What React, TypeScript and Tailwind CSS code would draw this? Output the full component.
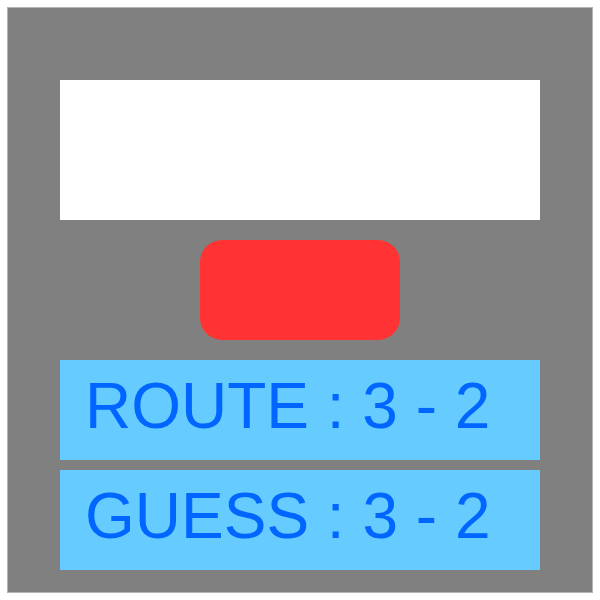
import React from 'react';

const ScoreRow = ({ label, score }: { label: string; score: string }) => (
  <div className="w-[480px] h-[100px] bg-[#66ccff] flex items-center pl-[25px] pb-[8px]">
    <span className="text-[64px] leading-none text-[#0066ff] font-['Liberation_Sans',Arial,sans-serif] whitespace-pre">
      {label} : {score}
    </span>
  </div>
);

export default function App() {
  return (
    <div className="w-[600px] h-[600px] bg-white p-[7px]">
      <div className="w-full h-full bg-[#808080] border border-[#b3b3b3] flex flex-col items-center pt-[72px]">
        <div className="w-[480px] h-[140px] bg-white" />
        <div className="w-[200px] h-[100px] bg-[#ff3333] rounded-[22px] mt-[20px]" />
        <div className="mt-[20px] flex flex-col gap-[10px]">
          <ScoreRow label="ROUTE" score="3 - 2" />
          <ScoreRow label="GUESS" score="3 - 2" />
        </div>
      </div>
    </div>
  );
}
